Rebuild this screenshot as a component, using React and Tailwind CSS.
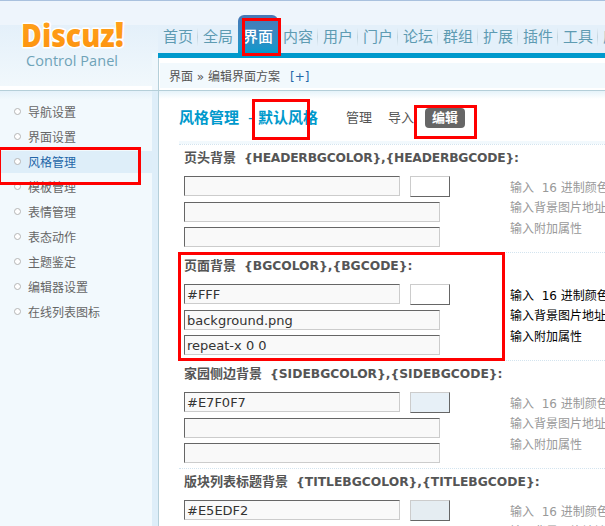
import clsx from "clsx";

const navItems = ["首页", "全局", "界面", "内容", "用户", "门户", "论坛", "群组", "扩展", "插件", "工具", "应用"];

const menuItems = [
  "导航设置",
  "界面设置",
  "风格管理",
  "模板管理",
  "表情管理",
  "表态动作",
  "主题鉴定",
  "编辑器设置",
  "在线列表图标",
];

const sections = [
  { label: "页头背景", labelWidth: "w-[60px]", vars: "{HEADERBGCOLOR},{HEADERBGCODE}:", tracking: "tracking-[-0.2px]", values: ["", "", ""], swatch: "bg-white" },
  { label: "页面背景", labelWidth: "w-[60px]", vars: "{BGCOLOR},{BGCODE}:", values: ["#FFF", "background.png", "repeat-x 0 0"], swatch: "bg-white", active: true },
  { label: "家园侧边背景", labelWidth: "w-[86px]", vars: "{SIDEBGCOLOR},{SIDEBGCODE}:", values: ["#E7F0F7", "", ""], swatch: "bg-[#E7F0F7]" },
  { label: "版块列表标题背景", labelWidth: "w-[112px]", vars: "{TITLEBGCOLOR},{TITLEBGCODE}:", values: ["#E5EDF2", "", ""], swatch: "bg-[#E5EDF2]" },
];

function Logo() {
  return (
    <svg width="140" height="70" viewBox="0 0 140 70" className="ml-[10px] mt-[6px]">
      <defs>
        <linearGradient id="logo" x1="0" y1="0" x2="0" y2="1">
          <stop offset="0" stopColor="#ffa51f" />
          <stop offset="1" stopColor="#fd900c" />
        </linearGradient>
      </defs>
      <g
        fontFamily="Open Sans, sans-serif"
        fontWeight="800"
        fill="url(#logo)"
        stroke="#fff"
        strokeWidth="3"
        strokeLinejoin="round"
        paintOrder="stroke"
      >
        <text x="11" y="41" fontSize="32" textLength="103" lengthAdjust="spacingAndGlyphs">
          Discuz<tspan fontSize="36">!</tspan>
        </text>
      </g>
      <text x="16" y="60" fontSize="14.5" fontFamily="Open Sans, sans-serif" fill="#6fa3b8" textLength="92">
        Control Panel
      </text>
    </svg>
  );
}

function Nav() {
  return (
    <nav className="flex h-[38px] items-stretch overflow-hidden">
      {navItems.map((item) => {
        const active = item === "界面";
        return (
          <div
            key={item}
            className={clsx(
              "flex w-10 shrink-0 items-center justify-between pl-[5px] pt-[6px] text-[15px] leading-none",
              active ? "rounded-t-[6px] bg-linear-to-b from-[#4878b6] to-[#0099cc] font-medium text-white" : "text-[#5e9bb2]"
            )}
          >
            <span className="whitespace-nowrap">{item}</span>
            {!active && item !== "全局" && (
              <i className="h-[18px] w-px bg-linear-to-b from-[#e4eff8] via-[#c3d5df] to-[#e4eff8]" />
            )}
          </div>
        );
      })}
    </nav>
  );
}

function Sidebar() {
  return (
    <aside className="w-[159px] shrink-0 border-r border-[#b5cfd9] bg-[#deeef9]">
      <ul className="h-full w-[152px] bg-[#f2f9fd] bg-[linear-gradient(#e4f1fa,#f2f9fd_9px)] pt-[8px]">
        {menuItems.map((item) => (
          <li key={item} className="flex h-[25px] items-center">
            <a
              className={clsx(
                "flex h-[22px] w-full items-center pl-[14px] text-[12px]",
                item === "风格管理" ? "bg-[#deeef9] text-[#2366a8]" : "text-[#666]"
              )}
            >
              <i className="mr-[7px] size-[7px] rounded-full border border-[#b5b5b5] bg-white" />
              <span className="pt-[2px]">{item}</span>
            </a>
          </li>
        ))}
      </ul>
    </aside>
  );
}

function Field({ value, className }) {
  return (
    <input
      readOnly
      value={value}
      className={clsx(
        "block h-5 border border-t-[#666] border-l-[#666] border-r-[#ccc] border-b-[#ccc] bg-[#f9f9f9] px-[2px] text-[13px] leading-none text-[#333]",
        className
      )}
    />
  );
}

function Section({ section }) {
  const { label, labelWidth, vars, tracking, values, swatch, active } = section;
  return (
    <div className="h-[108px] border-b border-dotted border-[#d3e4ef] pl-[5px]">
      <h3 className="flex h-[31px] items-center whitespace-pre pb-[5px] text-[13px] font-bold text-[#555]">
        <span className={labelWidth}>{label}</span>
        <span className={clsx("text-[12.3px]", tracking)}>{vars}</span>
      </h3>
      <div className="flex">
        <div className="w-[326px] shrink-0">
          <div className="mb-[5px] flex h-[21px] gap-[10px]">
            <Field value={values[0]} className="w-[216px]" />
            <div className={clsx("h-[21px] w-10 border border-t-[#ccc] border-l-[#ccc] border-r-[#666] border-b-[#666]", swatch)} />
          </div>
          <Field value={values[1]} className="mb-[5px] w-[256px]" />
          <Field value={values[2]} className="w-[256px]" />
        </div>
        <div className={clsx("whitespace-pre pt-[1.5px] text-[12px] leading-[20.5px]", active ? "text-black" : "text-[#999]")}>
          <p>输入  16 进制颜色</p>
          <p>输入背景图片地址</p>
          <p>输入附加属性</p>
        </div>
      </div>
    </div>
  );
}

// Red frame that highlights a step of the tutorial
function Mark({ className }) {
  return <div className={clsx("pointer-events-none absolute border-3 border-[#f00]", className)} />;
}

export default function App() {
  return (
    <div className="relative flex h-[526px] w-[605px] flex-col overflow-hidden bg-white font-['DejaVu_Sans','Noto_Sans_CJK_SC',sans-serif]">
      <header className="flex h-[91px] shrink-0 border-b border-b-[#b5cfd9] bg-[linear-gradient(#a9c1de_1px,#eef5fc_1px,#eef5fc_25px,#e4f0fa_25px,#f1f8fc_86px,#fff_86px)]">
        <div className="w-[152px] shrink-0">
          <Logo />
        </div>
        <div className="mt-[53px] w-[6px] shrink-0 bg-[#eff7fc]" />
        <div className="flex min-w-0 flex-1 flex-col">
          <div className="h-[53px] bg-[linear-gradient(#a9c1de_1px,#eef5fc_1px,#eef5fc_25px,#e4f0fa_25px)] pt-[15px]">
            <Nav />
          </div>
          <div className="h-[37px] border-l border-[#b5cfd9] bg-white">
            <div className="-ml-px h-[5px] bg-[#0099cc]" />
            <div className="ml-px mt-[5px] flex h-[25px] items-center whitespace-pre bg-[#f2f9fd] pl-[9px] pt-[2px] text-[12px] text-[#555]">
              界面 <span className="text-[12px]">»</span> 编辑界面方案
              <a className="ml-[10px] text-[#2366a8]">[+]</a>
            </div>
          </div>
        </div>
      </header>

      <div className="flex min-h-0 flex-1">
        <Sidebar />
        <main className="min-w-0 flex-1 overflow-hidden bg-[linear-gradient(#e6f3fa,#fff_8px)] pl-5">
          <div className="flex h-[54px] items-center whitespace-nowrap border-b border-dotted border-[#d3e4ef] bg-[linear-gradient(transparent_50px,#f2f9fd_50px)] pt-px text-[13px] text-[#555]">
            <h2 className="flex w-[167px] pt-px text-[15px] font-bold text-[#0099cc]">
              <span className="w-[69px]">风格管理</span>
              <span className="w-[10px] font-normal">-</span>
              <span>默认风格</span>
            </h2>
            <span className="w-[42px]">管理</span>
            <span className="w-[37px]">导入</span>
            <span className="flex h-5 w-10 items-center justify-center rounded-[4px] bg-[#666] font-bold text-white">编辑</span>
          </div>
          {sections.map((section) => (
            <Section key={section.label} section={section} />
          ))}
        </main>
      </div>

      <Mark className="left-[242px] top-[18px] h-[38px] w-[39px]" />
      <Mark className="left-[252px] top-[99px] h-[41px] w-[58px]" />
      <Mark className="left-[414px] top-[105px] h-[34px] w-[63px]" />
      <Mark className="-left-[2px] top-[147px] h-[38px] w-[143px]" />
      <Mark className="left-[178px] top-[252px] h-[109px] w-[327px]" />
    </div>
  );
}
